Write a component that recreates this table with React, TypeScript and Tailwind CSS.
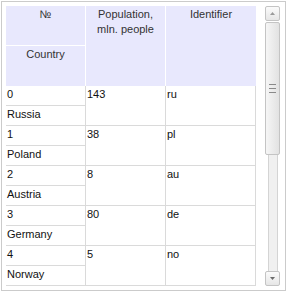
import React from "react";

const rows = [
  { idx: "0", country: "Russia", pop: "143", id: "ru" },
  { idx: "1", country: "Poland", pop: "38", id: "pl" },
  { idx: "2", country: "Austria", pop: "8", id: "au" },
  { idx: "3", country: "Germany", pop: "80", id: "de" },
  { idx: "4", country: "Norway", pop: "5", id: "no" },
];

function ScrollButton({ down }: { down?: boolean }) {
  return (
    <div className="flex h-[15px] w-[15px] items-center justify-center rounded-[2px] border border-[#c4c4c4] bg-gradient-to-b from-[#fbfbfb] to-[#e6e6e6]">
      <svg width="5" height="3" viewBox="0 0 5 3">
        {down ? <polygon points="0,0 5,0 2.5,3" fill="#6b6b6b" /> : <polygon points="0,3 5,3 2.5,0" fill="#9a9a9a" />}
      </svg>
    </div>
  );
}

export default function App() {
  return (
    <div className="h-[292px] w-[287px] bg-white p-[1px] font-['Liberation_Sans',Arial,sans-serif] text-[11px] leading-[15px]">
      <div className="flex h-[290px] w-[285px] border border-[#cbcbcb] bg-white pl-[4px] pt-[4px]">
        {/* table */}
        <div className="flex w-[250px] flex-col">
          {/* header */}
          <div className="flex h-[80px] bg-[#e8e8fd] text-[#333]">
            <div className="flex w-[80px] flex-col border-r border-white">
              <div className="h-[40px] border-b border-white pt-[1px] text-center">№</div>
              <div className="flex-1 pt-[1px] text-center">Country</div>
            </div>
            <div className="w-[80px] border-r border-white pt-[1px] text-center">
              Population,
              <br />
              mln. people
            </div>
            <div className="flex-1 pt-[1px] text-center">Identifier</div>
          </div>
          {/* data rows */}
          {rows.map((r) => (
            <div key={r.idx} className="flex h-[40px] text-[#111]">
              <div className="flex w-[80px] flex-col border-r border-[#dadada]">
                <div className="h-[20px] border-b border-[#dadada] pl-[1px] pt-[1px]">{r.idx}</div>
                <div className="h-[20px] border-b border-[#dadada] pl-[1px] pt-[1px]">{r.country}</div>
              </div>
              <div className="w-[80px] border-r border-b border-[#dadada] pl-[1px] pt-[1px]">{r.pop}</div>
              <div className="flex-1 border-r border-b border-[#dadada] pl-[1px] pt-[1px]">{r.id}</div>
            </div>
          ))}
        </div>
        {/* scrollbar */}
        <div className="ml-[9px] flex w-[15px] flex-col items-center pb-[4px]">
          <ScrollButton />
          <div className="mt-[1px] flex h-[133px] w-[15px] flex-col items-center justify-center gap-[3px] rounded-[2px] border border-[#c4c4c4] bg-gradient-to-r from-[#f6f6f6] to-[#e2e2e2]">
            <div className="h-[1px] w-[7px] bg-[#8a8a8a]" />
            <div className="h-[1px] w-[7px] bg-[#8a8a8a]" />
            <div className="h-[1px] w-[7px] bg-[#8a8a8a]" />
          </div>
          <div className="w-[10px] flex-1 border-x border-[#d4d4d4] bg-[#f0f0f0]" />
          <ScrollButton down />
        </div>
      </div>
    </div>
  );
}
